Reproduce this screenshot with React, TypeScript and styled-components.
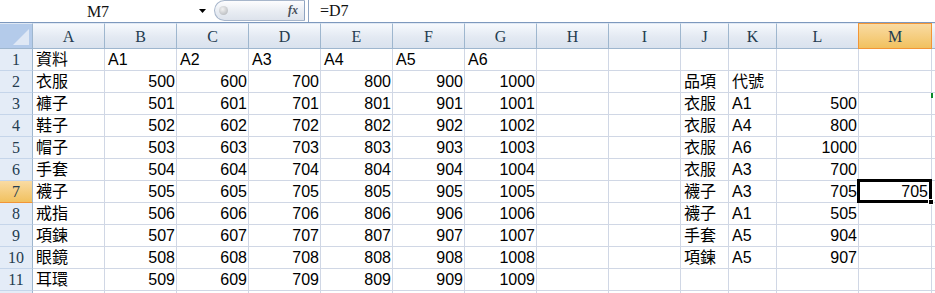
import styled, { createGlobalStyle, css } from "styled-components";

const GlobalStyle = createGlobalStyle`
  html, body {
    margin: 0;
    padding: 0;
    background: #ffffff;
    overflow: hidden;
  }
  * {
    box-sizing: border-box;
  }
`;

const COLS = ["A", "B", "C", "D", "E", "F", "G", "H", "I", "J", "K", "L", "M"];
const NAMES = ["衣服", "褲子", "鞋子", "帽子", "手套", "襪子", "戒指", "項鍊", "眼鏡", "耳環"];

type Cell = { v: string; num?: boolean };

// 右邊的查詢結果
const LOOKUP: Record<number, [string, string, string]> = {
  3: ["衣服", "A1", "500"],
  4: ["衣服", "A4", "800"],
  5: ["衣服", "A6", "1000"],
  6: ["衣服", "A3", "700"],
  7: ["襪子", "A3", "705"],
  8: ["襪子", "A1", "505"],
  9: ["手套", "A5", "904"],
  10: ["項鍊", "A5", "907"],
};

function rowCells(r: number): Cell[] {
  const cells: Cell[] = COLS.map(() => ({ v: "" }));
  if (r === 1) {
    cells[0] = { v: "資料" };
    for (let i = 1; i <= 6; i++) cells[i] = { v: "A" + i };
  } else if (r <= 11) {
    const k = r - 2;
    cells[0] = { v: NAMES[k] };
    for (let i = 1; i <= 6; i++) cells[i] = { v: String(400 + i * 100 + k), num: true };
  }
  if (r === 2) {
    cells[9] = { v: "品項" };
    cells[10] = { v: "代號" };
  }
  const l = LOOKUP[r];
  if (l) {
    cells[9] = { v: l[0] };
    cells[10] = { v: l[1] };
    cells[11] = { v: l[2], num: true };
  }
  if (r === 7) cells[12] = { v: "705", num: true };
  return cells;
}

export default function App() {
  const rows = Array.from({ length: 12 }, (_, i) => i + 1);
  return (
    <Page>
      <GlobalStyle />
      <FormulaBar>
        <NameBox>M7</NameBox>
        <DropArrow viewBox="0 0 7 4">
          <path d="M0 0 L7 0 L3.5 4 Z" fill="#000" />
        </DropArrow>
        <FxPill>
          <Knob />
          <Fx>fx</Fx>
        </FxPill>
        <FormulaText>=D7</FormulaText>
      </FormulaBar>
      <Sheet>
        <Corner>
          <CornerTri />
        </Corner>
        {COLS.map((c) => (
          <ColHead key={c} $active={c === "M"}>
            {c}
          </ColHead>
        ))}
        <ColHead $active={false} />
        {rows.map((r) => (
          <Row key={r} r={r} />
        ))}
      </Sheet>
    </Page>
  );
}

function Row({ r }: { r: number }) {
  const cells = rowCells(r);
  // 第 12 列只露出一點點，看不到列號
  return (
    <>
      <RowHead $active={r === 7}>{r < 12 ? r : ""}</RowHead>
      {cells.map((c, i) => {
        const selected = r === 7 && i === 12;
        return (
          <DataCell key={i} $num={!!c.num} $selected={selected}>
            {c.v}
            {selected && (
              <SelectionFrame>
                <FillHandle />
              </SelectionFrame>
            )}
          </DataCell>
        );
      })}
      <DataCell $num={false} $selected={false}>
        {r === 3 && <Tick />}
      </DataCell>
    </>
  );
}

const Page = styled.div`
  width: 935px;
  height: 293px;
  overflow: hidden;
  background: #ffffff;
`;

const FormulaBar = styled.div`
  display: flex;
  align-items: center;
  height: 23px;
  border-bottom: 1px solid #7d98bd;
  background: #ffffff;
`;

const NameBox = styled.div`
  width: 196px;
  text-align: center;
  font-family: "Liberation Serif", serif;
  font-size: 16px;
  color: #111;
  padding-top: 1px;
`;

const DropArrow = styled.svg`
  width: 7px;
  height: 4px;
  margin-left: 3px;
`;

const FxPill = styled.div`
  display: flex;
  align-items: center;
  justify-content: space-between;
  margin-left: 8px;
  width: 91px;
  height: 21px;
  margin-top: -1px;
  padding: 0 6px 0 4px;
  border: 1px solid #a7b6cb;
  border-right: 1px solid #8ea4c2;
  border-radius: 11px 0 0 11px;
  background: linear-gradient(#fdfdfe, #e9edf3 55%, #dde3ec);
`;

const Knob = styled.div`
  width: 9px;
  height: 9px;
  border-radius: 50%;
  background: radial-gradient(circle at 40% 35%, #f2f2f2, #b9bcc0 80%);
`;

const Fx = styled.span`
  font-family: "Liberation Serif", serif;
  font-style: italic;
  font-weight: bold;
  font-size: 12px;
  color: #48505a;
`;

const FormulaText = styled.div`
  margin-left: 3px;
  padding-left: 11px;
  height: 22px;
  line-height: 22px;
  border-left: 1px solid #8ea4c2;
  font-family: "Liberation Serif", serif;
  font-size: 16px;
  color: #111;
`;

const Sheet = styled.div`
  display: grid;
  grid-template-columns: 33px repeat(9, 72px) 48px 48px 82px 73px 20px;
  grid-template-rows: 26px repeat(12, 22px);
`;

const headBase = css`
  font-family: "Liberation Serif", serif;
  font-size: 16px;
  color: #243c50;
`;

const Corner = styled.div`
  position: relative;
  background: #b4cbea;
  border-top: 1px solid #dfe8f4;
  border-right: 1px solid #9eb6ce;
  border-bottom: 1px solid #9eb6ce;
`;

const CornerTri = styled.div`
  position: absolute;
  right: 3px;
  bottom: 3px;
  width: 0;
  height: 0;
  border-left: 16px solid transparent;
  border-bottom: 16px solid #dfe8f5;
`;

const ColHead = styled.div<{ $active: boolean }>`
  ${headBase};
  display: flex;
  align-items: flex-end;
  justify-content: center;
  padding-bottom: 2px;
  border-top: 1px solid #dfe8f4;
  border-right: 1px solid #9eb6ce;
  border-bottom: 1px solid #9eb6ce;
  background: linear-gradient(#f6f9fd, #e3e9f2 55%, #d9e2ee);
  ${(p) =>
    p.$active &&
    css`
      background: linear-gradient(#f9dba3, #f5cd7e 55%, #f1c15f);
      border: 1px solid #f29536;
      margin-left: -1px;
    `}
`;

const RowHead = styled.div<{ $active: boolean }>`
  ${headBase};
  display: flex;
  align-items: flex-end;
  justify-content: center;
  padding-bottom: 1px;
  line-height: 18px;
  background: #e4ecf7;
  border-right: 1px solid #9eb6ce;
  border-bottom: 1px solid #c5d5ea;
  ${(p) =>
    p.$active &&
    css`
      background: linear-gradient(#f9dba3, #f1c15f);
      border-bottom-color: #f29536;
    `}
`;

const DataCell = styled.div<{ $num: boolean; $selected: boolean }>`
  position: relative;
  display: flex;
  align-items: flex-end;
  justify-content: ${(p) => (p.$num ? "flex-end" : "flex-start")};
  padding: 0 ${(p) => (p.$num ? "1px" : "0")} 1px ${(p) => (p.$num ? "0" : "3px")};
  font-family: "Liberation Sans", "Noto Sans CJK TC", sans-serif;
  font-size: 16px;
  line-height: 19px;
  color: #000;
  white-space: nowrap;
  border-right: 1px solid #d0d7e5;
  border-bottom: 1px solid #d0d7e5;
  ${(p) =>
    p.$selected &&
    css`
      z-index: 2;
      padding-right: 3px;
    `}
`;

const SelectionFrame = styled.span`
  position: absolute;
  left: -2px;
  top: -2px;
  right: -1px;
  bottom: -1px;
  border: 3px solid #000;
  pointer-events: none;
`;

const FillHandle = styled.span`
  position: absolute;
  right: -5px;
  bottom: -5px;
  width: 6px;
  height: 6px;
  background: #000;
  border: 1px solid #fff;
`;

const Tick = styled.span`
  position: absolute;
  left: -1px;
  top: 0;
  width: 2px;
  height: 5px;
  background: #0b8a2a;
`;
